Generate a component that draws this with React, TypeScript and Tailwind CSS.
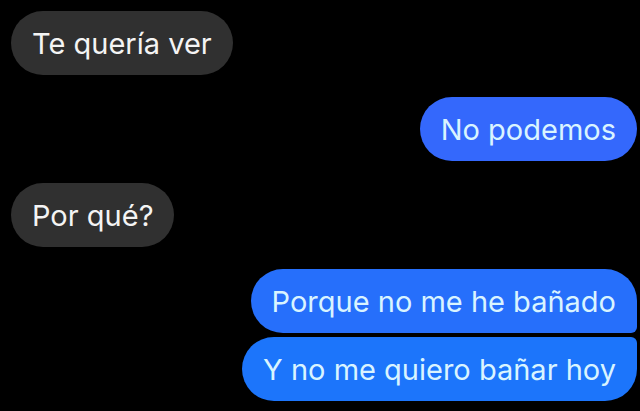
import clsx from 'clsx';

type Group = {
  from: 'them' | 'me';
  bubbles: { text: string; className: string }[];
};

const groups: Group[] = [
  { from: 'them', bubbles: [{ text: 'Te quería ver', className: 'rounded-[32px]' }] },
  { from: 'me', bubbles: [{ text: 'No podemos', className: 'rounded-[32px] bg-[#3468fc]' }] },
  { from: 'them', bubbles: [{ text: 'Por qué?', className: 'rounded-[32px]' }] },
  {
    from: 'me',
    bubbles: [
      { text: 'Porque no me he bañado', className: 'rounded-[32px] rounded-br-md bg-[#266ffb]' },
      { text: 'Y no me quiero bañar hoy', className: 'rounded-[32px] rounded-tr-md bg-[#1c75fb]' },
    ],
  },
];

const App = () => {
  return (
    <main className="min-h-screen bg-black pt-[11px] pb-2 pl-[11px] pr-[3px] font-['Inter','Liberation_Sans',sans-serif]">
      <ol className="flex flex-col gap-[22px]">
        {groups.map((group, i) => (
          <li
            key={i}
            className={clsx('flex flex-col gap-1', group.from === 'me' ? 'items-end' : 'items-start')}
          >
            {group.bubbles.map((bubble) => (
              <p
                key={bubble.text}
                className={clsx(
                  'px-[21px] pt-[17px] pb-[15px] text-[29px] leading-8',
                  group.from === 'me' ? 'text-[#d9f4ff]' : 'bg-[#303030] text-[#f4f4f4]',
                  bubble.className
                )}
              >
                {bubble.text}
              </p>
            ))}
          </li>
        ))}
      </ol>
    </main>
  );
};

export default App;
